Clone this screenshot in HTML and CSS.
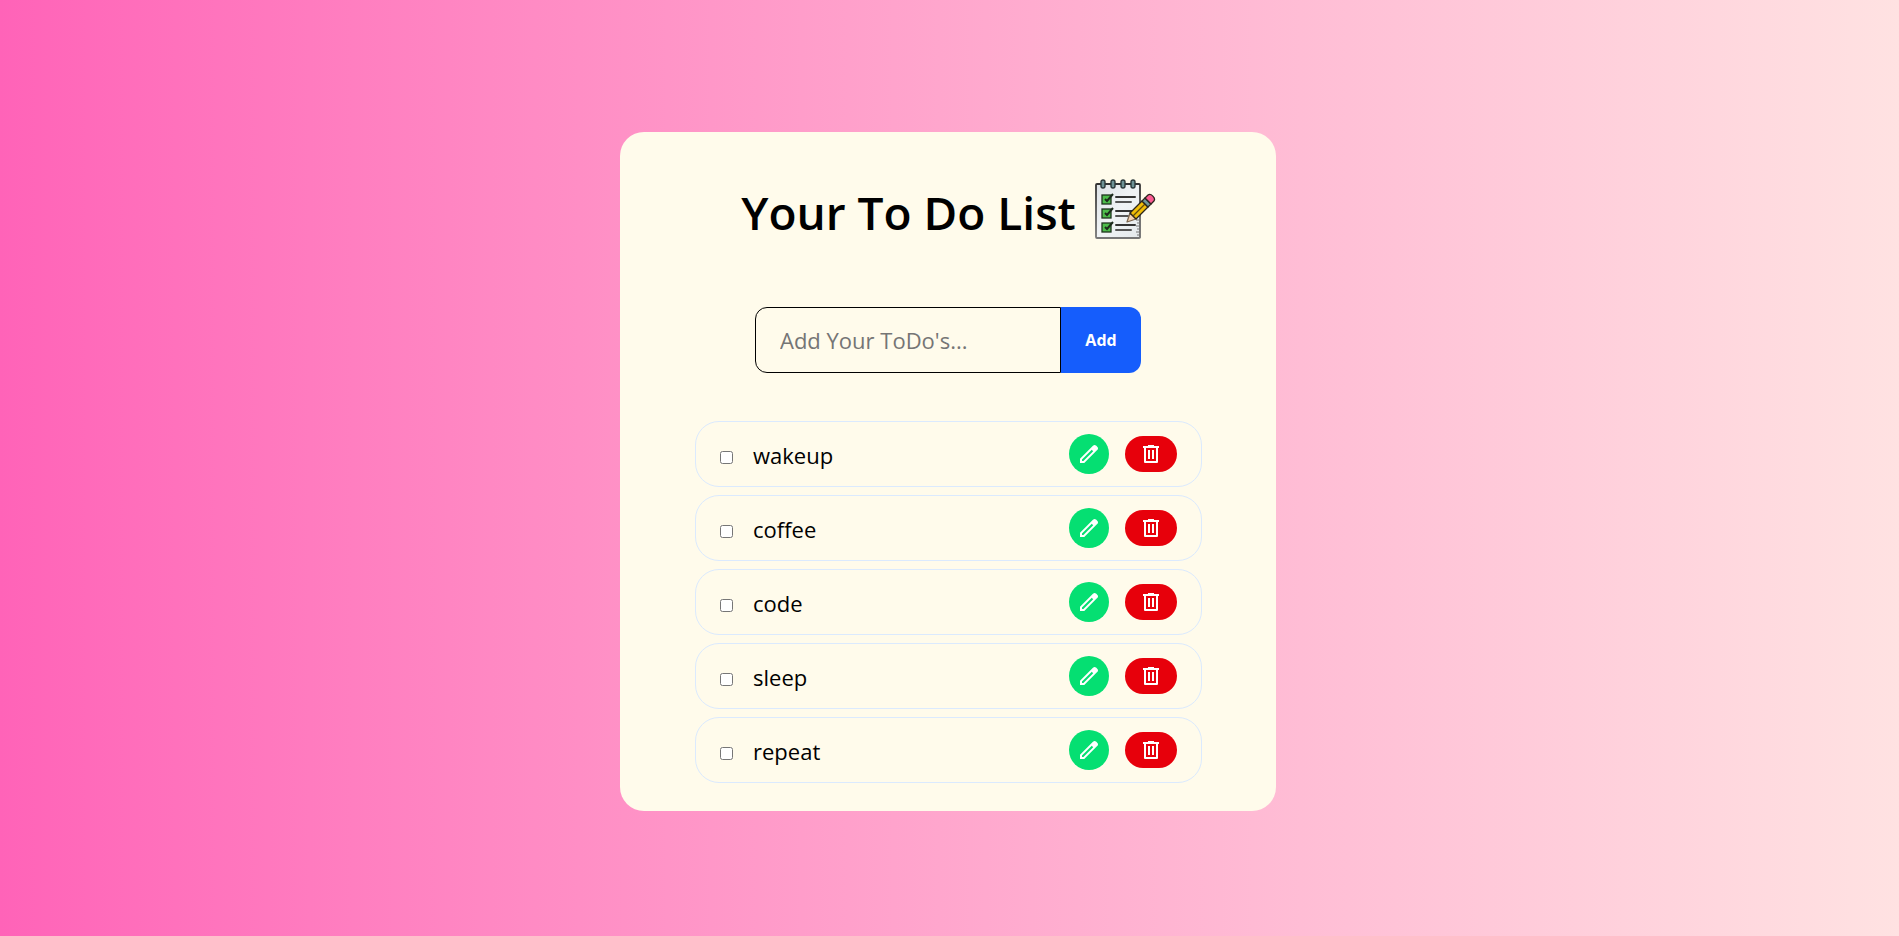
FILE: index.html
```html
<!DOCTYPE html>
<html lang="en">
<head>
<meta charset="utf-8">
<meta name="viewport" content="width=device-width, initial-scale=1">
<title>Your To Do List</title>
<link rel="stylesheet" href="styles.css">
</head>
<body>
<svg class="sprite" aria-hidden="true">
  <symbol id="edit" viewBox="0 -960 960 960"><path d="M200-200h57l391-391-57-57-391 391v57Zm-80 80v-170l528-527q12-11 26.500-17t30.500-6q16 0 31 6t26 18l55 56q12 11 17.500 26t5.500 30q0 16-5.500 30.500T817-647L290-120H120Zm640-584-56-56 56 56Zm-141 85-28-29 57 57-29-28Z"/></symbol>
  <symbol id="trash" viewBox="0 -960 960 960"><path d="M240-120q-40 0-40-40v-560h-40v-80h200v-40h240v40h200v80h-40v560q0 40-40 40H240Zm440-600H280v520h400v-520ZM360-280h80v-360h-80v360Zm160 0h80v-360h-80v360Z"/></symbol>
</svg>
<main class="card">
  <h1 class="title">Your To Do List
    <svg class="logo" viewBox="0 0 62 62" aria-hidden="true">
      <defs>
        <linearGradient id="paper" x1="0" y1="0" x2="1" y2="1"><stop offset="0" stop-color="#dde2e6"/><stop offset=".5" stop-color="#f0f3f5"/><stop offset="1" stop-color="#e4e9ec"/></linearGradient>
        <linearGradient id="edge" x1="0" y1="0" x2="0" y2="1"><stop offset="0" stop-color="#333"/><stop offset="1" stop-color="#777"/></linearGradient>
      </defs>
      <rect x="2" y="5" width="44" height="54" rx="1" fill="url(#paper)" stroke="url(#edge)" stroke-width="1.800"/>
      <g fill="#6d9296" stroke="#2b393b" stroke-width="1.400">
        <rect x="7" y="1" width="4" height="8" rx="2"/><rect x="17" y="1" width="4" height="8" rx="2"/><rect x="27" y="1" width="4" height="8" rx="2"/><rect x="37" y="1" width="4" height="8" rx="2"/>
      </g>
      <g fill="#4dbd4b" stroke="#1d331d" stroke-width="1.300">
        <rect x="8" y="16" width="9" height="9"/><rect x="8" y="30" width="9" height="9"/><rect x="8" y="44" width="9" height="9"/>
      </g>
      <path d="M11 20l2 2 6-7M11 34l2 2 6-7M11 48l2 2 6-7" fill="none" stroke="#1c2b1c" stroke-width="2"/>
      <path d="M22 18h19M22 32h19M22 46h19" stroke="#333" stroke-width="2" stroke-linecap="round"/>
      <path d="M22 23h15M22 37h12M22 51h15" stroke="#555" stroke-width="2" stroke-linecap="round"/>
      <path d="M46 38v21M42 41h4M43 44h3M42 47h4M43 50h3M42 53h4M43 56h3" stroke="#777" stroke-width="1.200"/>
      <g stroke="#2a241c" stroke-width="1.300" stroke-linejoin="round">
        <path d="M36 34l-3 9 9-3z" fill="#f7d3b2" stroke="#7b6650"/>
        <path d="M36 34l12-12 6 6-12 12z" fill="#f0bd08"/>
        <path d="M39 37l12-12" stroke="#5e4a10"/>
        <path d="M48 22l3-3 6 6-3 3z" fill="#6e9799"/>
        <path d="M51 19l3-3c3-2 8 3 6 6l-3 3z" fill="#fb5b92"/>
      </g>
    </svg>
  </h1>
  <form class="entry">
    <input class="entry-text" type="text" placeholder="Add Your ToDo's..." aria-label="New to-do">
    <button class="entry-add" type="button">Add</button>
  </form>
  <ul class="list">
    <li class="item"><label class="task"><input class="tick" type="checkbox">wakeup</label><button class="edit" type="button" aria-label="Edit wakeup"><svg class="icon"><use href="#edit"/></svg></button><button class="delete" type="button" aria-label="Delete wakeup"><svg class="icon"><use href="#trash"/></svg></button></li>
    <li class="item"><label class="task"><input class="tick" type="checkbox">coffee</label><button class="edit" type="button" aria-label="Edit coffee"><svg class="icon"><use href="#edit"/></svg></button><button class="delete" type="button" aria-label="Delete coffee"><svg class="icon"><use href="#trash"/></svg></button></li>
    <li class="item"><label class="task"><input class="tick" type="checkbox">code</label><button class="edit" type="button" aria-label="Edit code"><svg class="icon"><use href="#edit"/></svg></button><button class="delete" type="button" aria-label="Delete code"><svg class="icon"><use href="#trash"/></svg></button></li>
    <li class="item"><label class="task"><input class="tick" type="checkbox">sleep</label><button class="edit" type="button" aria-label="Edit sleep"><svg class="icon"><use href="#edit"/></svg></button><button class="delete" type="button" aria-label="Delete sleep"><svg class="icon"><use href="#trash"/></svg></button></li>
    <li class="item"><label class="task"><input class="tick" type="checkbox">repeat</label><button class="edit" type="button" aria-label="Edit repeat"><svg class="icon"><use href="#edit"/></svg></button><button class="delete" type="button" aria-label="Delete repeat"><svg class="icon"><use href="#trash"/></svg></button></li>
  </ul>
</main>
</body>
</html>
```
FILE: styles.css
```css
* { box-sizing: border-box; }
body {
  margin: 0;
  min-height: 100vh;
  padding: 7px 3px 0 0;
  display: flex;
  align-items: center;
  justify-content: center;
  font-family: "Open Sans", "Noto Sans", sans-serif;
  font-size: 22px;
  color: #000;
  background: linear-gradient(to right in oklab, #ff63b8, #ffe2e2);
}
.sprite { position: absolute; width: 0; height: 0; }
.card {
  width: 100%;
  max-width: 656px;
  padding: 44px 74px 28px 75px;
  border-radius: 24px;
  background: #fffbeb;
}
.title {
  margin: 0;
  display: flex;
  align-items: center;
  justify-content: center;
  gap: 18px;
  font-size: 46px;
  font-weight: 600;
  line-height: 72px;
  white-space: nowrap;
}
.logo { width: 62px; height: 62px; margin-bottom: 4px; flex: none; }
.entry {
  margin: 59px 61px 48px 60px;
  display: flex;
}
.entry-text {
  flex: 1;
  min-width: 0;
  height: 66px;
  padding: 0 24px;
  border: 1px solid #000;
  border-radius: 12px 0 0 12px;
  background: transparent;
  font: inherit;
}
.entry-text::placeholder { color: #757575; }
.entry-add {
  width: 80px;
  padding: 0;
  border: 0;
  border-radius: 0 12px 12px 0;
  background: #155dfc;
  color: #fff;
  font: bold 16px "Open Sans", "Noto Sans", sans-serif;
}
.list {
  margin: 0;
  padding: 0;
  display: grid;
  gap: 8px;
  list-style: none;
}
.item {
  height: 66px;
  padding: 0 24px;
  display: flex;
  align-items: center;
  gap: 16px;
  border: 1px solid #dbeafe;
  border-radius: 24px;
}
.task { flex: 1; display: flex; align-items: center; gap: 20px; padding-top: 2px; line-height: 32px; }
.tick { width: 13px; height: 13px; margin: 4px 0 0; }
.edit, .delete {
  display: flex;
  border: 0;
  color: #fff;
}
.edit { padding: 8px; border-radius: 20px; background: #05df72; }
.delete { padding: 6px 14px; border-radius: 18px; background: #e7000b; }
.icon { width: 24px; height: 24px; fill: currentColor; }
```
